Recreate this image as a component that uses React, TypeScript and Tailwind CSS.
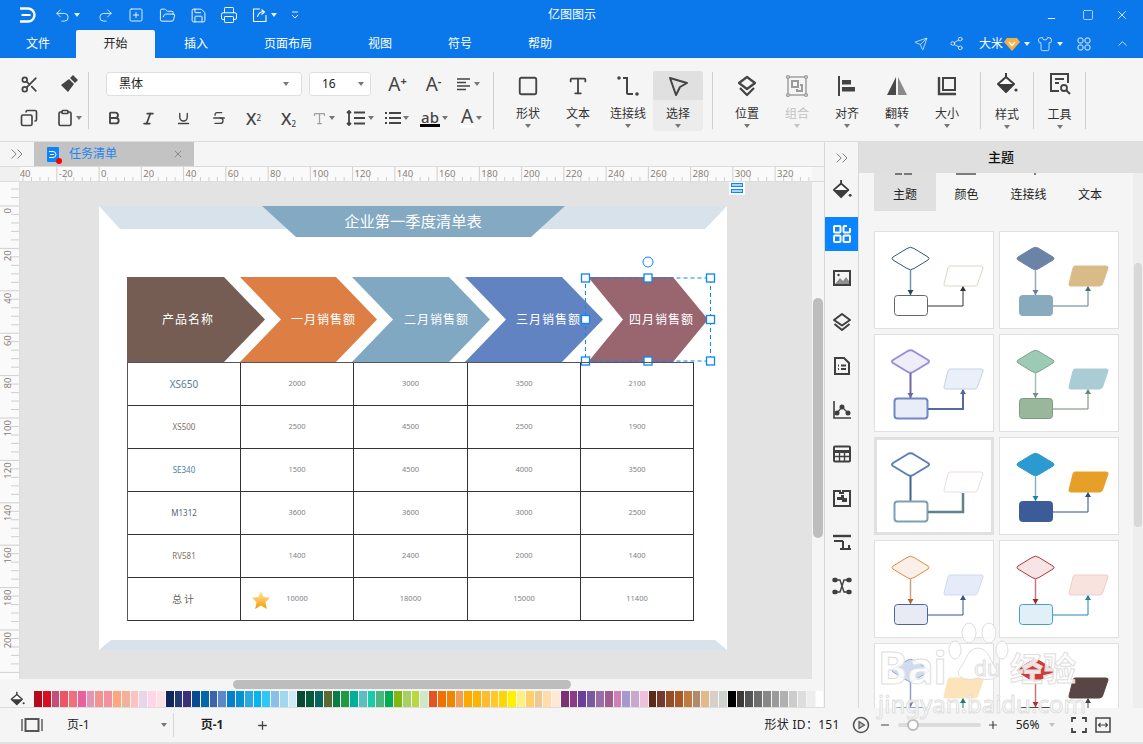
import type { ReactNode } from 'react';
import {
  Bold, ChevronUp, ChevronsRight, Clipboard, Copy, FolderOpen, Italic, Minus, Plus, Printer, Redo2, Save,
  Scissors, Send, Share2, Shirt, Square, SquarePlus, Strikethrough, Type, Underline, Undo2, X,
} from 'lucide-react';

const Caret = ({ light }: { light?: boolean }) => (
  <span className={`inline-block h-0 w-0 border-x-[3px] border-t-[4px] border-x-transparent ${light ? 'border-t-[#c4c4c4]' : 'border-t-[#777]'}`} />
);

const Logo = () => (
  <svg width="17" height="16" viewBox="0 0 17 16" fill="none" stroke="#fff" strokeWidth="2.4">
    <path d="M1 1.5h8a6.5 6.5 0 0 1 0 13H1" />
    <path d="M2.5 8h9" strokeWidth="2" />
  </svg>
);

const Bucket = ({ size = 20 }: { size?: number }) => (
  <svg width={size} height={size} viewBox="0 0 22 22" fill="none">
    <path d="M10 5 L18 12 L10 20 L2 12 Z" fill="#fff" stroke="#3c3c3c" strokeWidth="2" strokeLinejoin="round" />
    <path d="M2 12 H18 L10 20 Z" fill="#3c3c3c" />
    <path d="M10 1 V5" stroke="#3c3c3c" strokeWidth="2" />
    <circle cx="20" cy="18" r="1.6" fill="#3c3c3c" />
  </svg>
);

const iconProps = { width: 24, height: 24, viewBox: '0 0 24 24', fill: 'none', stroke: '#444', strokeWidth: 2 };

const ConnectorIcon = () => (
  <svg {...iconProps}>
    <circle cx="3" cy="4" r="1.8" fill="#444" stroke="none" />
    <circle cx="21" cy="20" r="1.8" fill="#444" stroke="none" />
    <path d="M7 4h4v15q0 1 1 1h5" />
  </svg>
);
const SelectIcon = () => (
  <svg {...iconProps}>
    <path d="M4 4 L21 9 L14 13 L10 21 Z" strokeLinejoin="round" />
  </svg>
);
const LayersIcon = () => (
  <svg {...iconProps} strokeWidth={2.2}>
    <path d="M12 3 L20 9 L12 15 L4 9 Z" strokeLinejoin="round" />
    <path d="M5 14 L12 21 L19 14" strokeLinejoin="round" />
  </svg>
);
const GroupIcon = () => (
  <svg {...iconProps} stroke="#9b9b9b" strokeWidth={1.4}>
    <rect x="3" y="3" width="18" height="18" />
    <rect x="7" y="7" width="6" height="6" strokeWidth={2} />
    <path d="M15 11h2v6h-5v-2" strokeWidth={2} />
    <circle cx="3" cy="3" r="1.4" fill="#fff" />
    <circle cx="21" cy="3" r="1.4" fill="#fff" />
    <circle cx="3" cy="21" r="1.4" fill="#fff" />
    <circle cx="21" cy="21" r="1.4" fill="#fff" />
  </svg>
);
const AlignIcon = () => (
  <svg {...iconProps}>
    <path d="M4 2v20" />
    <rect x="7" y="6" width="9" height="4.5" fill="#444" stroke="none" />
    <rect x="7" y="13" width="13" height="4.5" fill="#444" stroke="none" />
  </svg>
);
const FlipIcon = () => (
  <svg {...iconProps} stroke="none">
    <path d="M11 3 V21 H2 Z" fill="#4a4a4a" />
    <path d="M13 3 V21 H22 Z" fill="#8a8a8a" />
  </svg>
);
const SizeIcon = () => (
  <svg {...iconProps}>
    <path d="M4 3v17h17" strokeWidth={2.4} />
    <rect x="8" y="4" width="12" height="12" />
  </svg>
);
const ToolsIcon = () => (
  <svg {...iconProps}>
    <path d="M11 20H3V3h17v9" />
    <path d="M7 8h9M7 12h4" />
    <circle cx="16" cy="17" r="3" strokeWidth={1.8} />
    <path d="M18.5 19.5 22 23" />
  </svg>
);
const ThemesIcon = () => (
  <svg width="20" height="20" viewBox="0 0 20 20" fill="none" stroke="#fff" strokeWidth="2">
    <rect x="2" y="2" width="6.5" height="6.5" rx="1" />
    <path d="M11.5 8.5V3a1 1 0 0 1 1-1H15M18 4v3.5a1 1 0 0 1-1 1h-5.5" />
    <rect x="2" y="11.5" width="6.5" height="6.5" rx="1" />
    <rect x="11.5" y="11.5" width="6.5" height="6.5" rx="1" />
  </svg>
);
const side = { width: 20, height: 20, viewBox: '0 0 20 20', fill: 'none', stroke: '#3f3f3f', strokeWidth: 2 };
const ImageIcon = () => (
  <svg {...side}>
    <rect x="2" y="3" width="16" height="14" />
    <path d="M3 16 L8 10 L11 13 L14 9 L17 13 V16 Z" fill="#8f8f8f" stroke="none" />
    <circle cx="6.5" cy="7" r="1.2" fill="#3f3f3f" stroke="none" />
  </svg>
);
const DocIcon = () => (
  <svg {...side}>
    <path d="M3 2h9l5 5v11H3Z" />
    <path d="M6 9.5h1M9 9.5h5M6 13h1M9 13h5" />
  </svg>
);
const ChartIcon = () => (
  <svg {...side} strokeWidth={1.6}>
    <path d="M2 1v17h17" />
    <path d="M5 13 L10 7 L16 13" strokeWidth={1.2} />
    <circle cx="5" cy="13" r="1.7" fill="#3f3f3f" />
    <circle cx="10" cy="7" r="1.7" fill="#3f3f3f" />
    <circle cx="16" cy="13" r="1.7" fill="#3f3f3f" />
  </svg>
);
const TableIcon = () => (
  <svg {...side}>
    <rect x="2" y="2.5" width="16" height="15" rx="1" />
    <path d="M2 7.5h16" strokeWidth={3} />
    <path d="M2 12.5h16M7.5 7v10M12.5 7v10" strokeWidth={1.4} />
  </svg>
);
const PuzzleIcon = () => (
  <svg {...side}>
    <path d="M2 18V3h6v2h3V3h7v15Z" />
    <path d="M5 9h4V7h3v3h3v4h-5v-2H5Z" fill="#3f3f3f" stroke="none" />
  </svg>
);
const GanttIcon = () => (
  <svg {...side}>
    <path d="M1 4h18" strokeWidth={2.4} />
    <path d="M2 9h9M8 17h11M11 9v8" strokeWidth={2} />
    <path d="M17 13v4" strokeWidth={2} />
  </svg>
);
const MindIcon = () => (
  <svg {...side} strokeWidth={1.4}>
    <path d="M4 4 L8 4 L12 16 L16 16 M4 16 L8 16 L12 4 L16 4" />
    <rect x="1" y="2.5" width="4" height="3" rx="1.2" fill="#3f3f3f" />
    <rect x="15" y="2.5" width="4" height="3" rx="1.2" fill="#3f3f3f" />
    <rect x="1" y="14.5" width="4" height="3" rx="1.2" fill="#3f3f3f" />
    <rect x="15" y="14.5" width="4" height="3" rx="1.2" fill="#3f3f3f" />
  </svg>
);
const LayersSmall = () => (
  <svg {...side}>
    <path d="M10 2 L18 8 L10 13.5 L2 8 Z" strokeLinejoin="round" />
    <path d="M2.5 12 L10 18 L17.5 12" strokeLinejoin="round" />
  </svg>
);

const menus = ['插入', '页面布局', '视图', '符号', '帮助'];

const TitleBar = () => (
  <div className="h-[58px] shrink-0 bg-[#0a78ea] text-white">
    <div className="relative flex h-[30px] items-center pl-[19px]">
      <Logo />
      <Undo2 size={17} strokeWidth={1.3} className="ml-[18px] opacity-90" />
      <span className="ml-[3px] border-x-[3px] border-t-[4px] border-x-transparent border-t-white/90" />
      <Redo2 size={17} strokeWidth={1.3} className="ml-[17px] opacity-90" />
      <SquarePlus size={16} strokeWidth={1.3} className="ml-[14px]" />
      <FolderOpen size={17} strokeWidth={1.3} className="ml-[15px]" />
      <Save size={17} strokeWidth={1.3} className="ml-[14px]" />
      <Printer size={18} strokeWidth={1.3} className="ml-[13px]" />
      <svg width="16" height="16" viewBox="0 0 16 16" fill="none" stroke="#fff" strokeWidth="1.1" className="ml-[14px]">
        <path d="M14 8v6.5H1.5V2H8M5.5 10q1-5 6-5.5M9.5 2.5l3 2.5-3 2.5" />
      </svg>
      <span className="ml-[3px] border-x-[3px] border-t-[4px] border-x-transparent border-t-white/90" />
      <svg width="10" height="10" viewBox="0 0 10 10" fill="none" stroke="#fff" strokeWidth="1" className="ml-[13px] opacity-90">
        <path d="M2 2h6M2 5l3 3 3-3" />
      </svg>
      <span className="ml-[248px] text-[12px]">亿图图示</span>
      <div className="ml-auto flex items-center">
        <Minus size={11} strokeWidth={2} className="mt-[6px]" />
        <Square size={12} strokeWidth={1.3} className="ml-[25px]" />
        <X size={14} strokeWidth={1.4} className="ml-[21px] mr-[14px]" />
      </div>
    </div>
    <div className="flex h-[28px] items-stretch text-[12px]">
      <span className="flex w-[76px] items-center justify-center">文件</span>
      <span className="flex h-[28px] w-[79px] items-center justify-center rounded-t-[2px] bg-[#f5f5f5] text-[#222]">开始</span>
      <span className="flex w-[82px] items-center justify-center">{menus[0]}</span>
      <span className="flex w-[102px] items-center justify-center">{menus[1]}</span>
      <span className="flex w-[82px] items-center justify-center">{menus[2]}</span>
      <span className="flex w-[78px] items-center justify-center">{menus[3]}</span>
      <span className="flex w-[82px] items-center justify-center">{menus[4]}</span>
      <div className="ml-auto flex items-center pb-[1px]">
        <Send size={14} strokeWidth={1.3} className="opacity-90" />
        <Share2 size={15} strokeWidth={1.3} className="ml-[21px] opacity-90" />
        <span className="ml-[15px] text-[12px]">大米</span>
        <svg width="16" height="14" viewBox="0 0 16 14" className="ml-[1px]">
          <path d="M3 1h10l3 4-8 9-8-9Z" fill="#f3b14a" />
          <path d="M5 5l3 3.5 3-3.5" fill="none" stroke="#fff" strokeWidth="1.4" />
        </svg>
        <span className="ml-[4px] border-x-[3px] border-t-[4px] border-x-transparent border-t-white/90" />
        <Shirt size={16} strokeWidth={1.1} className="ml-[7px]" />
        <span className="ml-[4px] border-x-[3px] border-t-[4px] border-x-transparent border-t-white/90" />
        <svg width="14" height="14" viewBox="0 0 14 14" fill="none" stroke="#fff" strokeWidth="1" className="ml-[14px] opacity-90">
          <rect x="1" y="1" width="5" height="5" rx="1.8" />
          <rect x="8" y="1" width="5" height="5" rx="1.8" />
          <rect x="1" y="8" width="5" height="5" rx="1.8" />
          <rect x="8" y="8" width="5" height="5" rx="1.8" />
        </svg>
        <ChevronUp size={15} strokeWidth={1.2} className="ml-[24px] mr-[13px]" />
      </div>
    </div>
  </div>
);

const Sep = () => <div className="mt-[5px] h-[57px] w-px shrink-0 bg-[#cfcfcf]" />;

const SmallBtn = ({ children, caret, w = 'w-[35px]' }: { children: ReactNode; caret?: boolean; w?: string }) => (
  <div className={`flex h-[34px] shrink-0 items-center justify-center gap-[2px] text-[#444] ${w}`}>
    {children}
    {caret && <Caret />}
  </div>
);

const BigBtn = ({ icon, label, active, disabled, wide }: { icon: ReactNode; label: string; active?: boolean; disabled?: boolean; wide?: boolean }) => (
  <div className={`flex h-[60px] flex-col items-center rounded-[3px] ${wide ? 'w-full' : 'w-[50px]'} ${active ? 'bg-[#ececec]' : ''}`}>
    <div className={`flex h-[29px] w-full shrink-0 items-center justify-center rounded-t-[3px] ${active ? 'bg-[#e0e0e0]' : ''}`}>{icon}</div>
    <span className={`${wide ? 'mt-[10px]' : 'mt-[6px]'} h-[16px] text-[12px] leading-[16px] ${disabled ? 'text-[#c4c4c4]' : 'text-[#333]'}`}>{label}</span>
    <span className="mt-[2px] flex"><Caret light={disabled} /></span>
  </div>
);

const Ribbon = () => (
  <div className="flex h-[84px] shrink-0 items-start border-b border-[#dcdcdc] bg-[#f5f5f5] pt-[9px]">
    <div className="grid w-[88px] shrink-0 grid-cols-[40px_40px] pl-[9px]">
      <SmallBtn w="w-[40px]"><Scissors size={19} strokeWidth={2.2} /></SmallBtn>
      <SmallBtn w="w-[40px]">
        <svg width="20" height="20" viewBox="0 0 20 20" fill="#444">
          <path d="M14 1l5 5-3 3-5-5ZM10 5l5 5-6 8-7-7Z" />
        </svg>
      </SmallBtn>
      <SmallBtn w="w-[40px]"><Copy size={18} strokeWidth={2.2} className="-scale-x-100" /></SmallBtn>
      <SmallBtn w="w-[40px]" caret><Clipboard size={18} strokeWidth={2.2} /></SmallBtn>
    </div>
    <Sep />
    <div className="w-[404px] shrink-0">
      <div className="flex h-[34px] items-center pl-[17px]">
        <div className="flex h-[24px] w-[196px] items-center justify-between rounded-[3px] border border-[#dedede] bg-white px-[12px] text-[12px] text-[#222]">
          黑体<Caret />
        </div>
        <div className="ml-[7px] flex h-[24px] w-[62px] items-center justify-between rounded-[3px] border border-[#dedede] bg-white pl-[12px] pr-[6px] text-[12px] text-[#222]">
          16<Caret />
        </div>
        <SmallBtn w="ml-[9px] w-[35px]">
          <span className="text-[19px] leading-none">A<sup className="text-[11px] font-bold">+</sup></span>
        </SmallBtn>
        <SmallBtn w="w-[37px]">
          <span className="text-[19px] leading-none">A<sup className="text-[11px] font-bold">-</sup></span>
        </SmallBtn>
        <SmallBtn w="w-[32px]" caret>
          <svg width="15" height="14" viewBox="0 0 15 14" stroke="#444" strokeWidth="1.6">
            <path d="M0 2h13M0 5.5h9M0 9h13M0 12.5h9" />
          </svg>
        </SmallBtn>
      </div>
      <div className="flex h-[34px] items-center pl-[7px]">
        <SmallBtn><Bold size={16} strokeWidth={2.8} /></SmallBtn>
        <SmallBtn><Italic size={15} strokeWidth={2.8} /></SmallBtn>
        <SmallBtn><Underline size={15} strokeWidth={2.2} /></SmallBtn>
        <SmallBtn><Strikethrough size={16} strokeWidth={2} /></SmallBtn>
        <SmallBtn><span className="text-[17px] font-medium leading-none">X<sup className="text-[8px]">2</sup></span></SmallBtn>
        <SmallBtn><span className="text-[17px] font-medium leading-none">X<sub className="text-[8px]">2</sub></span></SmallBtn>
        <SmallBtn w="w-[35px]" caret><Type size={15} strokeWidth={2} className="text-[#a0a0a0]" /></SmallBtn>
        <SmallBtn w="w-[38px]" caret>
          <svg width="20" height="16" viewBox="0 0 20 16" stroke="#444" strokeWidth="1.8" fill="none">
            <path d="M3 1v14M1 3l2-2 2 2M1 13l2 2 2-2M8 2.5h11M8 8h11M8 13.5h11" />
          </svg>
        </SmallBtn>
        <SmallBtn w="w-[36px]" caret>
          <svg width="16" height="14" viewBox="0 0 16 14" stroke="#444" strokeWidth="1.8">
            <path d="M0 2h2M4 2h12M0 7h2M4 7h12M0 12h2M4 12h12" />
          </svg>
        </SmallBtn>
        <SmallBtn w="w-[38px]" caret>
          <span className="flex flex-col items-center border-b-[3px] border-black px-[1px] text-[15px] font-medium leading-[14px]">ab</span>
        </SmallBtn>
        <SmallBtn w="w-[36px]" caret>
          <span className="border-b-[3px] border-white px-[1px] text-[19px] leading-[17px]">A</span>
        </SmallBtn>
      </div>
    </div>
    <Sep />
    <div className="ml-[9px] mt-[4px] flex shrink-0">
      <BigBtn icon={<Square size={22} strokeWidth={2} className="text-[#444]" />} label="形状" />
      <BigBtn icon={<span className="text-[#444]"><Type size={22} strokeWidth={2} /></span>} label="文本" />
      <BigBtn icon={<ConnectorIcon />} label="连接线" />
      <BigBtn icon={<SelectIcon />} label="选择" active />
    </div>
    <div className="ml-[9px] flex shrink-0"><Sep /></div>
    <div className="ml-[9px] mt-[4px] flex shrink-0">
      <BigBtn icon={<LayersIcon />} label="位置" />
      <BigBtn icon={<GroupIcon />} label="组合" disabled />
      <BigBtn icon={<AlignIcon />} label="对齐" />
      <BigBtn icon={<FlipIcon />} label="翻转" />
      <BigBtn icon={<SizeIcon />} label="大小" />
    </div>
    <div className="ml-[8px] flex shrink-0"><Sep /></div>
    <div className="mt-[1px] w-[52px] shrink-0"><BigBtn wide icon={<Bucket size={22} />} label="样式" /></div>
    <Sep />
    <div className="mt-[1px] w-[51px] shrink-0"><BigBtn wide icon={<ToolsIcon />} label="工具" /></div>
    <Sep />
  </div>
);

const DocTabs = () => (
  <div className="flex h-[25px] shrink-0 items-stretch border-b border-[#dcdcdc] bg-[#f5f5f5]">
    <div className="flex w-[34px] items-center justify-center"><ChevronsRight size={20} strokeWidth={1} className="text-[#666]" /></div>
    <div className="flex w-[160px] items-center bg-[#c3c3c3] pl-[13px] pr-[10px]">
      <span className="relative flex h-[15px] w-[12px] items-center justify-center rounded-[1px] bg-[#0a84ff]">
        <svg width="8" height="7" viewBox="0 0 8 7" fill="none" stroke="#fff" strokeWidth="1">
          <path d="M0 .5h4a3 3 0 0 1 0 6H0M1 3.5h4" />
        </svg>
        <span className="absolute -bottom-[2px] -right-[3px] h-[6px] w-[6px] rounded-full bg-[#ff0000]" />
      </span>
      <span className="ml-[10px] text-[12px] text-[#1f86f0]">任务清单</span>
      <X size={12} strokeWidth={1.2} className="ml-auto text-[#666]" />
    </div>
  </div>
);

const hLabels = ['-40', '-20', '0', '20', '40', '60', '80', '100', '120', '140', '160', '180', '200', '220', '240', '260', '280', '300', '320'];

const HRuler = () => (
  <svg width="824" height="15" className="block shrink-0 bg-[#fafafa]">
    {Array.from({ length: 96 }).map((_, i) => {
      const x = 14.6 + i * 8.45;
      const major = i % 5 === 0;
      return <line key={i} x1={x} x2={x} y1={major ? 0 : 10} y2={15} stroke="#cfcfcf" strokeWidth="1" />;
    })}
    {hLabels.map((t, i) => (
      <text key={t} x={14.6 + i * 42.25 + 2} y={10} fontSize="9.5" fill="#8a8078">{t}</text>
    ))}
    <rect x="0" y="0" width="20" height="15" fill="#f0f0f0" />
    <rect x="812" y="0" width="12" height="15" fill="#f5f5f5" />
    <line x1="0" x2="824" y1="14.5" y2="14.5" stroke="#dcdcdc" />
  </svg>
);

const VRuler = () => (
  <svg width="20" height="497" className="block shrink-0 bg-[#fafafa]">
    {Array.from({ length: 58 }).map((_, i) => {
      const y = 24 - 16.96 + i * 8.48;
      const major = (i - 2) % 5 === 0;
      return <line key={i} y1={y} y2={y} x1={major ? 0 : 11} x2={20} stroke="#cfcfcf" strokeWidth="1" />;
    })}
    {['0', '20', '40', '60', '80', '100', '120', '140', '160', '180', '200'].map((t, i) => {
      const y = 24 + i * 42.4 + 2;
      return (
        <text key={t} x={11} y={y} fontSize="9.5" fill="#8a8078" textAnchor="end" transform={`rotate(-90 11 ${y})`}>{t}</text>
      );
    })}
    <line x1="19.5" x2="19.5" y1="0" y2="497" stroke="#dcdcdc" />
  </svg>
);

const rows = [
  { name: 'XS650', nameCls: 'text-[10px] text-[#5d7c92]', v: ['2000', '3000', '3500', '2100'] },
  { name: 'XS500', nameCls: 'text-[8px] text-[#7f716a]', v: ['2500', '4500', '2500', '1900'] },
  { name: 'SE340', nameCls: 'text-[8px] text-[#4d80a6]', v: ['1500', '4500', '4000', '3500'] },
  { name: 'M1312', nameCls: 'text-[8px] text-[#5a6474]', v: ['3600', '3600', '3000', '2500'] },
  { name: 'RV581', nameCls: 'text-[8px] text-[#8b6f5b]', v: ['1400', '2400', '2000', '1400'] },
  { name: '总计', nameCls: 'text-[10px] text-[#666] tracking-[2px]', v: ['10000', '18000', '15000', '11400'] },
];

const Handle = ({ x, y }: { x: number; y: number }) => (
  <rect x={x - 4} y={y - 4} width="8" height="8" fill="#fff" stroke="#0a84ff" strokeWidth="1.3" />
);

const Chevrons = () => (
  <div className="absolute left-[28px] top-[71px] h-[85px] w-[566px] whitespace-nowrap text-[12px] tracking-[1px] text-white">
    <svg width="566" height="85" className="block overflow-visible">
      <polygon points="0,0 97,0 138,42.5 97,85 0,85" fill="#755d53" />
      <polygon points="113,0 209,0 250,42.5 209,85 113,85 154,42.5" fill="#dd7f45" />
      <polygon points="225,0 322,0 363,42.5 322,85 225,85 266,42.5" fill="#80a8c3" />
      <polygon points="338,0 435,0 476,42.5 435,85 338,85 379,42.5" fill="#6183c2" />
      <polygon points="461,0 546,0 581,42.5 546,85 461,85 496,42.5" fill="#996670" />
    </svg>
    <span className="absolute left-[35px] top-[34px]">产品名称</span>
    <span className="absolute left-[164px] top-[34px]">一月销售额</span>
    <span className="absolute left-[277px] top-[34px]">二月销售额</span>
    <span className="absolute left-[389px] top-[34px]">三月销售额</span>
    <span className="absolute left-[502px] top-[34px]">四月销售额</span>
    <svg width="566" height="110" viewBox="0 -25 566 110" className="absolute left-0 top-[-25px] overflow-visible">
      <rect x="458.5" y="1" width="125" height="83" fill="none" stroke="#0a84ff" strokeDasharray="4 3" />
      <circle cx="521" cy="-15" r="5" fill="#fff" stroke="#0a84ff" />
      <Handle x={458.5} y={1} />
      <Handle x={521} y={1} />
      <Handle x={583.5} y={1} />
      <Handle x={458.5} y={42.5} />
      <Handle x={583.5} y={42.5} />
      <Handle x={458.5} y={84} />
      <Handle x={521} y={84} />
      <Handle x={583.5} y={84} />
    </svg>
  </div>
);

const Page = () => (
  <div className="absolute left-[79px] top-[24px] h-[444px] w-[628px] bg-white">
    <svg width="628" height="32" className="absolute left-0 top-0">
      <polygon points="0,0 628,0 606,23 21,23" fill="#d8e2ea" />
      <polygon points="163,0 466,0 432,31 197,31" fill="#83a9c3" />
    </svg>
    <div className="absolute left-0 top-[7px] w-[628px] text-center text-[15.3px] leading-[16px] text-white">企业第一季度清单表</div>
    <Chevrons />
    <div className="absolute left-[28px] top-[156px] grid w-[567px] grid-cols-[113px_113px_114px_113px_113px] border-l border-t border-[#555]">
      {rows.map((r) => (
        <div key={r.name} className="contents">
          <div className={`flex h-[43px] items-center justify-center border-b border-r border-[#333] ${r.nameCls}`}>{r.name}</div>
          {r.v.map((n, i) => (
            <div key={i} className="flex h-[43px] items-center justify-center border-b border-r border-[#333] text-[7.5px] text-[#7d8288]">{n}</div>
          ))}
        </div>
      ))}
    </div>
    <svg width="20" height="20" viewBox="0 0 20 20" className="absolute left-[152px] top-[384px]">
      <defs>
        <linearGradient id="star" x1="0" y1="0" x2="0" y2="1">
          <stop offset="0" stopColor="#ffe9a8" />
          <stop offset="1" stopColor="#f59c00" />
        </linearGradient>
      </defs>
      <path d="M10 1 L12.8 7 L19 7.8 L14.5 12 L15.8 19 L10 15.5 L4.2 19 L5.5 12 L1 7.8 L7.2 7 Z" fill="url(#star)" />
    </svg>
    <svg width="628" height="10" className="absolute bottom-0 left-0">
      <polygon points="12,0 616,0 628,10 0,10" fill="#d8e2ea" />
    </svg>
  </div>
);

const palette = [
  '#b50a1e', '#d90e20', '#c05078', '#ec5468', '#f0707a', '#e8609c', '#e295b5', '#f2938c', '#f490a0', '#ffa67c', '#f3b09a', '#fbc2bf', '#e8d6e8', '#ffd6e8', '#ffe0e6',
  '#12265a', '#223a70', '#3d2f7a', '#0a4a8e', '#0468a8', '#3a64ae', '#5a88c8', '#0480d0', '#0890d0', '#2aaae2', '#05b4f0', '#30c6f8', '#88c0e8', '#a0d8f0', '#cdeaf6',
  '#064a36', '#065a38', '#06655f', '#5a6a30', '#0a7c48', '#1e9a40', '#00ae9c', '#58c0c0', '#18cca8', '#48b880', '#00b050', '#84b810', '#a8d060', '#b8d840', '#cfe8c8',
  '#e45420', '#f07008', '#f28500', '#f59c50', '#fbab00', '#ffb400', '#ffbb33', '#ffca28', '#ffd600', '#fff000', '#fff080', '#ffd068', '#eeca90', '#ffdcaa', '#ffe8d4',
  '#7e3075', '#8a3c86', '#6a3f98', '#7a5a9e', '#9a6ea4', '#a05c8c', '#d080b4', '#a898d0', '#c8a8cc', '#eec0dc',
  '#5c2a18', '#78392c', '#944e28', '#aa5826', '#c07c40', '#b08a6c', '#e2b988', '#d8d0c8', '#ccd4cc',
  '#000000', '#3e3a38', '#555555', '#6e6e6e', '#888888', '#9a9a9a', '#b0b0b0', '#cccccc', '#dddddd', '#eeeeee', '#ffffff',
];

const Workspace = () => (
  <div className="flex w-[824px] shrink-0 flex-col">
    <DocTabs />
    <HRuler />
    <div className="flex h-[497px] shrink-0">
      <VRuler />
      <div className="relative w-[792px] shrink-0 overflow-hidden bg-[#e3e3e3]">
        <Page />
        <div className="absolute left-[709px] top-0 flex h-[13px] w-[16px] flex-col items-center gap-[2px] bg-white pt-[1px]">
          <span className="h-[4px] w-[12px] border border-[#0a84ff] bg-[#a8d4ff]" />
          <span className="h-[4px] w-[12px] border border-[#0a84ff] bg-[#a8d4ff]" />
        </div>
      </div>
      <div className="flex-1 bg-[#f5f5f5]">
        <div className="ml-[1px] mt-[116px] h-[240px] w-[10px] rounded-full bg-[#bdbdbd]" />
      </div>
    </div>
    <div className="h-[11px] shrink-0 bg-[#f5f5f5] pt-[1px]">
      <div className="ml-[233px] h-[9px] w-[338px] rounded-full bg-[#bdbdbd]" />
    </div>
    <div className="flex h-[18px] shrink-0 items-center border-b border-[#dcdcdc] bg-[#f5f5f5]">
      <div className="flex w-[34px] items-center justify-center"><Bucket size={15} /></div>
      <div className="flex h-[16px] w-[790px] gap-px">
        {palette.map((c, i) => (
          <span key={i} className="flex-1" style={{ background: c }} />
        ))}
      </div>
    </div>
  </div>
);

const SideIcons = () => (
  <div className="flex w-[35px] shrink-0 flex-col items-center border-x border-[#d8d8d8] bg-[#f5f5f5]">
    <div className="flex h-[31px] items-center"><ChevronsRight size={20} strokeWidth={1} className="text-[#666]" /></div>
    <div className="flex h-[44px] items-start pt-[6px]"><Bucket size={20} /></div>
    <div className="flex h-[34px] w-full items-center justify-center bg-[#0a84ff]"><ThemesIcon /></div>
    <div className="mt-[5px] flex h-[44px] items-center"><ImageIcon /></div>
    <div className="flex h-[44px] items-center"><LayersSmall /></div>
    <div className="flex h-[44px] items-center"><DocIcon /></div>
    <div className="flex h-[44px] items-center"><ChartIcon /></div>
    <div className="flex h-[44px] items-center"><TableIcon /></div>
    <div className="flex h-[44px] items-center"><PuzzleIcon /></div>
    <div className="flex h-[44px] items-center"><GanttIcon /></div>
    <div className="flex h-[44px] items-center"><MindIcon /></div>
  </div>
);

type Theme = {
  d: string; ds: string; dw?: number;
  l: string; lw?: number; a?: string;
  r: string; rs: string; rw?: number;
  p: string; ps: string;
  c: string; cw?: number; ca?: string;
};

const themes: Theme[] = [
  { d: '#fff', ds: '#2c5a73', l: '#6f96a8', a: '#1d4a63', r: '#fff', rs: '#666', p: '#fff', ps: '#ddd5c8', c: '#333', ca: '#333' },
  { d: '#6a83a6', ds: '#6a83a6', l: '#9aa5b5', a: '#6a7b94', r: '#87abbd', rs: '#87abbd', p: '#d9bb88', ps: '#d9bb88', c: '#5c7d8e', ca: '#4a6c80' },
  { d: '#efedf9', ds: '#9b8fd4', dw: 2, l: '#6d66a3', lw: 2, a: '#6d66a3', r: '#e9edf8', rs: '#7088c8', rw: 2, p: '#e9f0f9', ps: '#c3d4e6', c: '#566a9f', cw: 2, ca: '#566a9f' },
  { d: '#9ccab5', ds: '#7da391', l: '#a6bdb4', a: '#6f9484', r: '#99b79a', rs: '#7f9b80', p: '#aaccd4', ps: '#aaccd4', c: '#6a8a72', ca: '#6a8a72' },
  { d: '#fff', ds: '#5d7fb8', dw: 2, l: '#3f6294', lw: 2, r: '#fff', rs: '#7e9fb3', rw: 2, p: '#fff', ps: '#eadde2', c: '#62808e', cw: 2.5 },
  { d: '#2b9ad0', ds: '#2b9ad0', l: '#83b2c8', a: '#1f7fa8', r: '#3b5c99', rs: '#3b5c99', p: '#e6a028', ps: '#e6a028', c: '#2f4f85', ca: '#2f4f85' },
  { d: '#fbefe9', ds: '#e48a3c', l: '#c9a080', a: '#b06a30', r: '#e8eaf4', rs: '#4a66a0', p: '#e6ebf9', ps: '#cfd9f2', c: '#36538a', ca: '#36538a' },
  { d: '#f6e4e6', ds: '#b8333d', l: '#c47a80', a: '#a5222c', r: '#e0eff8', rs: '#4aa0c4', p: '#f9e3de', ps: '#eccfc8', c: '#1e86ad', ca: '#1e86ad' },
  { d: '#cfdcf0', ds: '#8ea6cf', l: '#8fa2c4', a: '#6a80a8', r: '#e8eef8', rs: '#8ea6cf', p: '#fce3ba', ps: '#fce3ba', c: '#1f7a70', ca: '#1f7a70' },
  { d: '#cf3a3a', ds: '#cf3a3a', l: '#c67676', a: '#b03030', r: '#574643', rs: '#574643', p: '#574643', ps: '#574643', c: '#444', ca: '#444' },
];

const ThemeThumb = ({ t, selected }: { t: Theme; selected?: boolean }) => (
  <div className={`h-[98px] w-[120px] border border-[#e0e0e0] bg-white ${selected ? 'shadow-[inset_0_0_0_2px_#e0e0e0]' : ''}`}>
    <svg width="118" height="96" viewBox="0 0 118 96" fill="none">
      <path d="M32 16.5 Q35.5 14 39 16.5 L53 25 Q55 26.5 53 28 L39 36.5 Q35.5 39 32 36.5 L18 28 Q16 26.5 18 25 Z" fill={t.d} stroke={t.ds} strokeWidth={t.dw ?? 1} />
      <path d="M35.5 38 V63" stroke={t.l} strokeWidth={t.lw ?? 1.5} />
      {t.a && <path d="M32.5 58 H38.5 L35.5 63 Z" fill={t.a} />}
      <rect x="19.5" y="63.5" width="33" height="20" rx="3" fill={t.r} stroke={t.rs} strokeWidth={t.rw ?? 1} />
      <path d="M75 34 H106 Q108.5 34 108 36 L102.5 52 Q102 54 99 54 H71 Q68.5 54 69 52 L73 36 Q73.5 34 75 34 Z" fill={t.p} stroke={t.ps} />
      <path d="M53 74 H88 V55" stroke={t.c} strokeWidth={t.cw ?? 1} />
      {t.ca && <path d="M85 59 H91 L88 54 Z" fill={t.ca} />}
    </svg>
  </div>
);

const ThemePanel = () => (
  <div className="flex min-w-0 flex-1 flex-col bg-[#f5f5f5]">
    <div className="flex h-[31px] shrink-0 items-center justify-center bg-[#dfdfdf] text-[13px] font-medium text-[#111]">主题</div>
    <div className="flex min-h-0 flex-1">
      <div className="relative w-[274px] shrink-0 overflow-hidden pl-[15px]">
        <svg width="180" height="2" className="absolute left-[36px] top-0">
          <path d="M0 1h7M9 1h8M61 1h20M139 1h2" stroke="#555" strokeWidth="1.5" />
        </svg>
        <div className="flex h-[38px] text-[12px] text-[#222]">
          <span className="flex w-[62px] items-center justify-center bg-[#e0e0e0] pt-[6px]">主题</span>
          <span className="flex w-[61px] items-center justify-center pt-[6px]">颜色</span>
          <span className="flex w-[63px] items-center justify-center pt-[6px]">连接线</span>
          <span className="flex w-[60px] items-center justify-center pt-[6px]">文本</span>
        </div>
        <div className="mt-[20px] grid grid-cols-[120px_120px] gap-[5px]">
          {themes.map((t, i) => (
            <ThemeThumb key={i} t={t} selected={i === 4} />
          ))}
        </div>
      </div>
      <div className="flex-1 bg-[#eeeeee] pl-px pt-[90px]">
        <div className="h-[264px] w-[8px] rounded-full bg-[#d8d8d8]" />
      </div>
    </div>
  </div>
);

const StatusBar = () => (
  <div className="flex h-[36px] shrink-0 items-center border-b-[2px] border-[#e2e2e2] bg-[#f5f5f5] text-[12px] text-[#222]">
    <svg width="22" height="14" viewBox="0 0 22 14" fill="none" stroke="#555" className="ml-[21px]">
      <rect x="4.5" y="1" width="13" height="12" strokeWidth="2" />
      <path d="M1 1v12M21 1v12" strokeWidth="1.4" />
    </svg>
    <span className="ml-[24px]">页-1</span>
    <span className="ml-[71px] flex"><Caret /></span>
    <div className="ml-[6px] h-[24px] w-px bg-[#d8d8d8]" />
    <span className="ml-[27px] font-bold">页-1</span>
    <Plus size={13} strokeWidth={2.4} className="ml-[33px] text-[#444]" />
    <span className="ml-[495px] tracking-[0.3px]">形状 ID：151</span>
    <svg width="18" height="18" viewBox="0 0 18 18" fill="none" stroke="#555" strokeWidth="1.6" className="ml-[12px]">
      <circle cx="9" cy="9" r="7.5" />
      <path d="M7 5.5 L12.5 9 L7 12.5 Z" fill="#bbb" strokeWidth="1.2" />
    </svg>
    <Minus size={12} strokeWidth={2.4} className="ml-[9px] text-[#444]" />
    <div className="relative ml-[7px] h-[4px] w-[83px] rounded-full bg-[#dcdcdc]">
      <span className="absolute left-[9px] top-[-4px] h-[12px] w-[12px] rounded-full border-[2px] border-[#bbb] bg-white" />
    </div>
    <Plus size={12} strokeWidth={2.4} className="ml-[6px] text-[#444]" />
    <span className="ml-[17px]">56%</span>
    <span className="ml-[10px] flex"><Caret light /></span>
    <svg width="16" height="16" viewBox="0 0 16 16" fill="none" stroke="#444" strokeWidth="1.8" className="ml-[16px]">
      <path d="M1 5V1h4M11 1h4v4M15 11v4h-4M5 15H1v-4" />
    </svg>
    <svg width="16" height="16" viewBox="0 0 16 16" fill="none" stroke="#444" strokeWidth="1.5" className="ml-[8px]">
      <rect x="1" y="1" width="14" height="14" />
      <path d="M4 8h8M5.5 6 3.5 8l2 2M10.5 6l2 2-2 2" strokeWidth="1.1" />
    </svg>
  </div>
);

const Watermark = () => (
  <div className="pointer-events-none absolute left-[870px] top-[620px] h-[96px] w-[220px] text-white/85 [-webkit-text-stroke:1px_#dedede]">
    <span className="absolute left-[8px] top-[30px] text-[44px] font-bold leading-[34px]">Bai</span>
    <svg width="62" height="60" viewBox="0 0 62 60" fill="#ffffff" fillOpacity="0.8" stroke="#dedede" className="absolute left-[77px] top-[2px]">
      <ellipse cx="8" cy="28" rx="6" ry="9" />
      <ellipse cx="22" cy="11" rx="7" ry="10" />
      <ellipse cx="42" cy="11" rx="7" ry="10" />
      <ellipse cx="55" cy="28" rx="6" ry="9" />
      <path d="M31 26 C20 26 18 42 12 48 C8 56 22 60 31 56 C42 60 55 56 50 48 C44 42 42 26 31 26 Z" />
    </svg>
    <span className="absolute left-[104px] top-[38px] text-[21px] leading-[20px]">du</span>
    <span className="absolute left-[140px] top-[32px] text-[33px] font-bold leading-[34px]">经验</span>
    <span className="absolute left-[8px] top-[73px] text-[24px] leading-[22px]">jingyan.baidu.com</span>
  </div>
);

export default function App() {
  return (
    <div className="relative flex h-[744px] w-[1143px] flex-col overflow-hidden bg-[#f5f5f5] [font-family:'Noto_Sans','Noto_Sans_CJK_SC',sans-serif]">
      <TitleBar />
      <Ribbon />
      <div className="flex h-[566px] shrink-0">
        <Workspace />
        <SideIcons />
        <ThemePanel />
      </div>
      <StatusBar />
      <Watermark />
    </div>
  );
}
